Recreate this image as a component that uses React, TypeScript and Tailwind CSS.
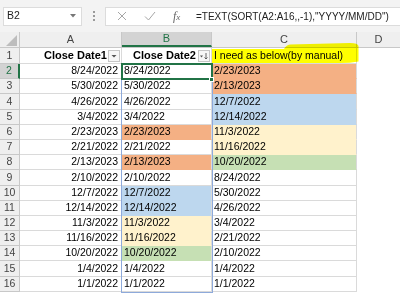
import React from "react";

type Fill = "" | "o" | "b" | "y" | "g";

const fillCls: Record<Fill, string> = {
    "": "bg-white border-b-[#dadada]",
    o: "bg-[#f4b084] border-b-[#f4b084]",
    b: "bg-[#bdd7ee] border-b-[#bdd7ee]",
    y: "bg-[#fff2cc] border-b-[#fff2cc]",
    g: "bg-[#c6e0b4] border-b-[#c6e0b4]",
};

const rows: [string, Fill, string, Fill][] = [
    ["8/24/2022", "", "2/23/2023", "o"],
    ["5/30/2022", "", "2/13/2023", "o"],
    ["4/26/2022", "", "12/7/2022", "b"],
    ["3/4/2022", "", "12/14/2022", "b"],
    ["2/23/2023", "o", "11/3/2022", "y"],
    ["2/21/2022", "", "11/16/2022", "y"],
    ["2/13/2023", "o", "10/20/2022", "g"],
    ["2/10/2022", "", "8/24/2022", ""],
    ["12/7/2022", "b", "5/30/2022", ""],
    ["12/14/2022", "b", "4/26/2022", ""],
    ["11/3/2022", "y", "3/4/2022", ""],
    ["11/16/2022", "y", "2/21/2022", ""],
    ["10/20/2022", "g", "2/10/2022", ""],
    ["1/4/2022", "", "1/4/2022", ""],
    ["1/1/2022", "", "1/1/2022", ""],
];

const FilterButton: React.FC<{ sorted?: boolean }> = ({ sorted }) => (
    <div className="w-[12px] h-[12px] border border-[#c6c6c6] bg-[#f7f7f7] flex items-center justify-center shrink-0">
        <svg width="10" height="10" viewBox="0 0 10 10">
            <path d={sorted ? "M1 4.5 L4 4.5 L2.5 6.5 Z" : "M2.5 4 L7.5 4 L5 6.5 Z"} fill="#555" />
            {sorted && <path d="M7 2 L7 8 M5.5 6.5 L7 8 L8.5 6.5" stroke="#555" strokeWidth="0.9" fill="none" />}
        </svg>
    </div>
);

export const App: React.FC = (): React.ReactElement => {
    return (
        <div className="w-[400px] h-[295px] overflow-hidden bg-white relative font-['Liberation_Sans',Arial,sans-serif] text-black">
            {/* formula bar */}
            <div className="h-[32px] bg-[#f3f3f3] flex items-center">
                <div className="ml-[3px] w-[79px] h-[19px] bg-white border border-[#dcdcdc] flex items-center justify-between pl-[3px] pr-[5px]">
                    <span className="text-[10.5px] text-[#222]">B2</span>
                    <svg width="6" height="4" viewBox="0 0 6 4"><path d="M0 0 L6 0 L3 3.5 Z" fill="#777" /></svg>
                </div>
                <div className="w-[23px] flex flex-col items-center gap-[2px]">
                    <span className="w-[2px] h-[2px] bg-[#9a9a9a]" />
                    <span className="w-[2px] h-[2px] bg-[#9a9a9a]" />
                    <span className="w-[2px] h-[2px] bg-[#9a9a9a]" />
                </div>
                <div className="flex-1 h-[19px] bg-white border-y border-l border-[#dcdcdc] flex items-center">
                    <div className="w-[90px] flex items-center pl-[11px] gap-[17px]">
                        <svg width="10" height="10" viewBox="0 0 10 10"><path d="M1 1 L9 9 M9 1 L1 9" stroke="#a6a6a6" strokeWidth="1" /></svg>
                        <svg width="12" height="10" viewBox="0 0 12 10"><path d="M1 5.5 L4.5 9 L11 1" stroke="#a6a6a6" strokeWidth="1" fill="none" /></svg>
                        <span className="font-['Liberation_Serif',serif] italic text-[12px] text-[#666] leading-none">f<span className="text-[9px]">x</span></span>
                    </div>
                    <span className="text-[10px] text-[#222] whitespace-nowrap">=TEXT(SORT(A2:A16,,-1),"YYYY/MM/DD")</span>
                </div>
            </div>

            {/* sheet */}
            <div className="relative">
                {/* column headers */}
                <div className="flex h-[16px] bg-[#efefef] text-[11px] text-[#444] border-b border-[#c8c8c8]">
                    <div className="w-[20px] border-r border-[#c8c8c8] flex items-end justify-end pr-[2px] pb-[1px]">
                        <svg width="11" height="11" viewBox="0 0 11 11"><path d="M11 0 L11 11 L0 11 Z" fill="#bdbdbd" /></svg>
                    </div>
                    <div className="w-[102px] border-r border-[#c8c8c8] flex items-center justify-center">A</div>
                    <div className="w-[90px] border-r border-[#c8c8c8] bg-[#d3d3d3] text-[#217346] border-b-2 border-b-[#217346] flex items-center justify-center">B</div>
                    <div className="w-[145px] border-r border-[#c8c8c8] flex items-center justify-center">C</div>
                    <div className="flex-1 flex items-center justify-center">D</div>
                </div>

                {/* row 1 */}
                <div className="flex h-[16px] text-[11px]">
                    <div className="w-[20px] bg-[#efefef] border-r border-b border-[#c8c8c8] flex items-center justify-center text-[10.5px] text-[#444]">1</div>
                    <div className="w-[102px] border-r border-b border-[#dadada] flex items-center justify-end gap-[1px] pr-[1px]">
                        <span className="font-bold">Close Date1</span>
                        <FilterButton />
                    </div>
                    <div className="w-[90px] border-r border-b border-[#dadada] flex items-center justify-end gap-[2px] pr-[1px]">
                        <span className="font-bold">Close Date2</span>
                        <FilterButton sorted />
                    </div>
                    <div className="w-[145px] border-r border-b border-[#dadada] flex items-center pl-[2px] text-[10.5px]">
                        I need as below(by manual)
                    </div>
                    <div className="flex-1" />
                </div>

                {rows.map(([a, bFill, c, cFill], i) => {
                    const n = i + 2;
                    return (
                        <div key={n} className="flex h-[15.2px] text-[10.5px]">
                            <div className={`w-[20px] border-r border-b border-[#c8c8c8] flex items-center justify-center text-[#444] ${n === 2 ? "bg-[#d3d3d3] text-[#217346] border-r-2 border-r-[#217346]" : "bg-[#efefef]"}`}>{n}</div>
                            <div className="w-[102px] border-r border-b border-[#dadada] flex items-center justify-end pr-[3px]">{a}</div>
                            <div className={`w-[90px] border-r border-r-[#dadada] border-b flex items-center pl-[2px] ${fillCls[bFill]}`}>{a}</div>
                            <div className={`w-[145px] border-r border-r-[#dadada] border-b flex items-center pl-[2px] ${fillCls[cFill]}`}>{c}</div>
                            <div className="flex-1" />
                        </div>
                    );
                })}

                {/* spill range border on B2:B16 */}
                <div className="absolute left-[121px] top-[32px] w-[92px] h-[229px] border border-[#8eaadb] pointer-events-none" />
                {/* active cell B2 */}
                <div className="absolute left-[121px] top-[31px] w-[92px] h-[17px] border-2 border-[#217346] pointer-events-none" />
                <div className="absolute left-[209px] top-[45px] w-[5px] h-[5px] bg-[#217346] border border-white pointer-events-none" />

                {/* hand-drawn yellow marker over C1 */}
                <svg className="absolute left-0 top-0 mix-blend-multiply pointer-events-none" width="400" height="40" viewBox="0 0 400 40">
                    <path d="M212 17 L284 17 Q286 13 290 12.5 L350 11 Q358 11 358.5 14 L358.5 29.5 Q350 31 340 31 L212 31 Z" fill="#ffff00" />
                </svg>
            </div>
        </div>
    );
};

export default App;
